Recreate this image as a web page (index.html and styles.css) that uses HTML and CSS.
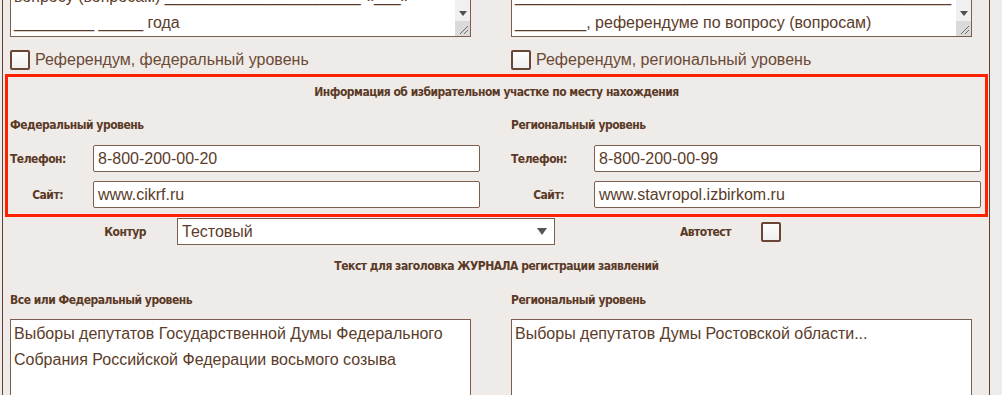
FILE: index.html
```
<!DOCTYPE html>
<html lang="ru">
<head>
    <meta charset="UTF-8">
    <title>Настройки участка</title>
    <link rel="stylesheet" href="styles.css">
</head>
<body>
    <div class="page">
        <!-- Шаблоны текста референдума -->
        <div class="cols top-cols">
            <div class="ta ta-top">
                <div class="ta-text">в ____ референдуме по<br>вопросу (вопросам) ______________________ «___»<br>_________ _____ года</div>
                <div class="ta-bar">
                    <div class="bar-track"></div>
                    <div class="bar-btn"><span class="arrow"></span></div>
                    <div class="bar-grip">
                        <svg width="15" height="15" viewBox="0 0 15 15"><path d="M5 13 L13 5 M9 13 L13 9" stroke="#6a6a6a" stroke-width="1"/></svg>
                    </div>
                </div>
            </div>
            <div class="ta ta-top">
                <div class="ta-text">в ____ референдуме<br>_________________________________________________<br>________, референдуме по вопросу (вопросам)</div>
                <div class="ta-bar">
                    <div class="bar-track"></div>
                    <div class="bar-btn"><span class="arrow"></span></div>
                    <div class="bar-grip">
                        <svg width="15" height="15" viewBox="0 0 15 15"><path d="M5 13 L13 5 M9 13 L13 9" stroke="#6a6a6a" stroke-width="1"/></svg>
                    </div>
                </div>
            </div>
        </div>

        <div class="cols check-cols">
            <label class="check-row"><span class="checkbox"></span>Референдум, федеральный уровень</label>
            <label class="check-row"><span class="checkbox"></span>Референдум, региональный уровень</label>
        </div>

        <!-- Информация об участке -->
        <div class="info-box">
            <div class="box-title">Информация об избирательном участке по месту нахождения</div>
            <div class="info-cols">
                <div class="info-col">
                    <div class="level">Федеральный уровень</div>
                    <div class="field">
                        <span class="field-label">Телефон:</span>
                        <div class="input">8-800-200-00-20</div>
                    </div>
                    <div class="field">
                        <span class="field-label">Сайт:</span>
                        <div class="input">www.cikrf.ru</div>
                    </div>
                </div>
                <div class="info-col">
                    <div class="level">Региональный уровень</div>
                    <div class="field">
                        <span class="field-label">Телефон:</span>
                        <div class="input">8-800-200-00-99</div>
                    </div>
                    <div class="field">
                        <span class="field-label">Сайт:</span>
                        <div class="input">www.stavropol.izbirkom.ru</div>
                    </div>
                </div>
            </div>
        </div>

        <div class="contour-row">
            <span class="contour-label">Контур</span>
            <div class="select">
                <span>Тестовый</span>
                <span class="arrow arrow-select"></span>
            </div>
            <span class="autotest-label">Автотест</span>
            <span class="checkbox autotest-check"></span>
        </div>

        <div class="section-title">Текст для заголовка ЖУРНАЛА регистрации заявлений</div>

        <div class="cols journal-labels">
            <div class="level">Все или Федеральный уровень</div>
            <div class="level">Региональный уровень</div>
        </div>

        <div class="cols">
            <div class="ta ta-bottom">
                <div class="ta-text">Выборы депутатов Государственной Думы Федерального Собрания Российской Федерации восьмого созыва</div>
            </div>
            <div class="ta ta-bottom">
                <div class="ta-text">Выборы депутатов Думы Ростовской области...</div>
            </div>
        </div>
    </div>
</body>
</html>
```

FILE: styles.css
```
* {
    margin: 0;
    padding: 0;
    box-sizing: border-box;
}

body {
    background: #ededed;
    font-family: 'Liberation Sans', Arial, sans-serif;
    font-size: 16px;
    color: #5b3c2a;
    overflow: hidden;
}

.page {
    width: 988px;
    height: 395px;
    margin-left: 2px;
    padding-left: 7px;
    background: #efebe8;
    border-left: 1px solid #6b3f2c;
    border-right: 1px solid #6b3f2c;
}

.cols {
    display: grid;
    grid-template-columns: 501px 461px;
}

/* Text areas */
.ta {
    display: flex;
    width: 461px;
    background: #fff;
    border: 1px solid #7c5e4e;
    overflow: hidden;
}

.ta-text {
    flex: 1;
    padding: 0 3px;
    line-height: 26px;
    color: #5b3c2a;
    white-space: normal;
}

.ta-top {
    height: 80px;
    margin-top: -43px;
}

.ta-top .ta-text {
    white-space: nowrap;
}

.ta-bottom {
    height: 90px;
}

.ta-bottom .ta-text {
    padding-top: 1px;
}

.ta-bar {
    width: 15px;
    display: flex;
    flex-direction: column;
    background: #f0f0f0;
}

.bar-track {
    flex: 1;
}

.bar-btn {
    height: 15px;
    display: flex;
    align-items: center;
    justify-content: center;
}

.bar-grip {
    height: 15px;
    background: #dadada;
}

.bar-grip svg {
    display: block;
}

.arrow {
    width: 0;
    height: 0;
    border-left: 4px solid transparent;
    border-right: 4px solid transparent;
    border-top: 5px solid #505050;
}

/* Checkboxes */
.check-cols {
    margin-top: 13px;
}

.check-row {
    display: flex;
    align-items: center;
    gap: 5px;
    height: 20px;
    color: #6a4a36;
}

.checkbox {
    display: inline-block;
    width: 20px;
    height: 20px;
    border: 2px solid #6b4534;
    border-radius: 2px;
    background: linear-gradient(#fdfdfd, #efefef);
}

/* Info box */
.info-box {
    margin: 4px 0 0 -5px;
    width: 983px;
    height: 143px;
    border: 3px solid #ff2200;
    padding-left: 2px;
}

.box-title,
.level,
.field-label,
.contour-label,
.autotest-label,
.section-title {
    font-family: 'DejaVu Sans Condensed', 'DejaVu Sans', sans-serif;
    font-weight: bold;
    font-size: 12px;
    letter-spacing: -0.5px;
    color: #5a3a26;
}

.box-title {
    height: 30px;
    line-height: 30px;
    text-align: center;
    padding-right: 2px;
}

.info-cols {
    display: grid;
    grid-template-columns: 501px 470px;
}

.info-col .level {
    margin-top: 8px;
    height: 20px;
    line-height: 20px;
}

.field {
    display: flex;
    align-items: center;
    gap: 30px;
    margin-top: 9px;
}

.info-col .level + .field {
    margin-top: 10px;
}

.field-label {
    width: 53px;
    text-align: right;
}

.input {
    width: 387px;
    height: 27px;
    line-height: 25px;
    padding-left: 4px;
    background: #fff;
    border: 1px solid #7c5e4e;
    border-radius: 2px;
    color: #5b3c2a;
}

/* Contour row */
.contour-row {
    display: flex;
    align-items: center;
    height: 27px;
    margin-top: 1px;
}

.contour-label {
    width: 136px;
    text-align: right;
}

.select {
    display: flex;
    align-items: center;
    justify-content: space-between;
    width: 378px;
    height: 27px;
    margin-left: 31px;
    padding: 0 7px 0 4px;
    background: #fff;
    border: 1px solid #7c5e4e;
}

.arrow-select {
    border-left-width: 5px;
    border-right-width: 5px;
    border-top: 7px solid #555;
}

.autotest-label {
    width: 176px;
    text-align: right;
}

.autotest-check {
    margin-left: 30px;
}

.section-title {
    text-align: center;
    height: 20px;
    line-height: 20px;
    margin-top: 11px;
    padding-right: 6px;
}

.journal-labels {
    margin-top: 14px;
    height: 20px;
    line-height: 20px;
}

.journal-labels + .cols {
    margin-top: 9px;
}
```
